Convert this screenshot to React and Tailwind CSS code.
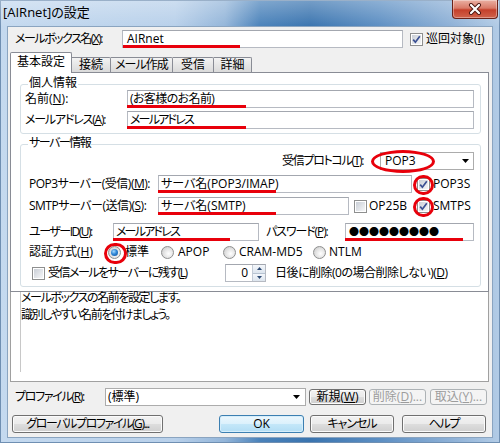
import React from "react";

const RED_BG = "bg-[#e8000b]";

function Check({ checked, className = "", children }) {
  return (
    <span className={"relative inline-flex w-[13px] h-[13px] shrink-0 border border-[#8e8f8f] bg-white " + className}>
      <span className="absolute inset-[1px] bg-[linear-gradient(135deg,#c9ced6,#f6f7f8)]" />
      {checked && (
        <svg className="absolute left-0 top-0" width="11" height="11" viewBox="0 0 11 11">
          <path d="M2.2 5.6 L4.4 8.2 L8.8 2.2" fill="none" stroke="#3a4f92" strokeWidth="1.7" />
        </svg>
      )}
      {children}
    </span>
  );
}

function Radio({ checked, children }) {
  return (
    <span className="relative inline-flex w-[13px] h-[13px] shrink-0 rounded-full border border-[#8e8f8f] bg-[radial-gradient(circle_at_60%_60%,#ffffff_0%,#e6e6e6_45%,#c4c4c4_100%)]">
      {checked && (
        <span className="absolute left-[2px] top-[2px] w-[7px] h-[7px] rounded-full bg-[radial-gradient(circle_at_40%_35%,#a6dcff_0%,#2f86d6_45%,#0c4f98_100%)]" />
      )}
      {children}
    </span>
  );
}

function Box({ className = "", children }) {
  return (
    <div className={"relative h-[18px] shrink-0 flex items-center bg-white border border-[#b6bac2] border-t-[#a3a7af] " + className}>
      {children}
    </div>
  );
}

function Arrow() {
  return (
    <svg width="7" height="4" viewBox="0 0 7 4" className="shrink-0">
      <path d="M0 0 H7 L3.5 4 Z" fill="#000" />
    </svg>
  );
}

function Combo({ className = "", children, extra }) {
  return (
    <div className={"relative h-[18px] shrink-0 flex items-center justify-between bg-white border border-[#acacac] " + className}>
      <span>{children}</span>
      <Arrow />
      {extra}
    </div>
  );
}

function Btn({ className = "", children, variant = "normal" }) {
  const v =
    variant === "default"
      ? "border-[#3c7fb1] bg-[linear-gradient(to_bottom,#ecf7fd_0%,#dcf1fc_48%,#c4e7f9_52%,#b2ddf4_100%)] shadow-[inset_0_0_0_1px_#d6eefb]"
      : variant === "disabled"
      ? "border-[#adb2b5] bg-[#f4f4f4] text-[#9c9c9c]"
      : "border-[#707070] bg-[linear-gradient(to_bottom,#f2f2f2_0%,#ebebeb_48%,#dddddd_52%,#cfcfcf_100%)] shadow-[inset_0_0_0_1px_#fbfbfb]";
  return (
    <div className={"shrink-0 flex items-center justify-center rounded-[3px] border " + v + " " + className}>
      {children}
    </div>
  );
}

function Line({ className = "" }) {
  return <span className={"absolute bottom-[-1px] h-[3px] " + RED_BG + " " + className} />;
}

const TAB_OFF =
  "h-[15px] flex items-center justify-center border border-l-0 border-b-0 border-[#898c95] rounded-tr-[2px] bg-[linear-gradient(to_bottom,#f3f3f3,#e6e6e6_50%,#dadada)]";

export default function App() {
  return (
    <div className="relative w-[500px] h-[443px] overflow-hidden flex flex-col bg-[linear-gradient(to_right,#c4d9ef_0%,#b8d0ea_35%,#93b5d9_45%,#4a82ba_52%,#3a74af_62%,#5d8fc3_76%,#8db0d6_90%,#b3cce6_100%)] shadow-[inset_0_0_0_1px_#6f8fb2] font-['Open_Sans','Noto_Sans_CJK_JP',sans-serif] [font-feature-settings:'palt'] text-[12px] leading-[14px] text-black">
      {/* title bar */}
      <div className="relative h-[27px] shrink-0 flex items-center pl-[3px] pb-[3px] bg-[linear-gradient(to_bottom,rgba(255,255,255,0.3),rgba(255,255,255,0))]">
        <span className="text-[13px] leading-[16px]">[AIRnet]の設定</span>
        <div className="absolute right-[2px] top-0 w-[46px] h-[19px] rounded-b-[4px] border border-t-0 border-[#6a2219] bg-[linear-gradient(to_bottom,#eab0a3_0%,#d97a68_45%,#c5402b_55%,#d0634c_100%)] shadow-[inset_0_0_0_1px_rgba(255,255,255,0.35)] flex items-center justify-center">
          <svg width="14" height="12" viewBox="0 0 14 12">
            <path d="M3 2 L11 10 M11 2 L3 10" stroke="#4a1510" strokeWidth="4" strokeLinecap="round" />
            <path d="M3 2 L11 10 M11 2 L3 10" stroke="#ffffff" strokeWidth="2.2" strokeLinecap="round" />
          </svg>
        </div>
      </div>

      {/* client area */}
      <div className="mx-[8px] h-[410px] shrink-0 flex flex-col bg-[#f0f0f0] shadow-[0_0_0_1px_#8aa4c0]">
        {/* mailbox name row */}
        <div className="mt-[3px] h-[18px] flex items-center">
          <span className="pl-[7px] w-[114px] shrink-0 tracking-[-1.5px]">
            メールボックス名(<u>X</u>):
          </span>
          <Box className="w-[281px] pl-[4px]">
            AIRnet
            <Line className="left-0 w-[117px]" />
          </Box>
          <Check checked className="ml-[7px]" />
          <span className="ml-[3px]">
            巡回対象(<u>I</u>)
          </span>
        </div>

        {/* tabs */}
        <div className="relative z-10 mt-[4px] h-[20px] flex items-end pl-[2px]">
          <div className="w-[62px] h-[21px] -mb-[1px] pb-[2px] flex items-center justify-center bg-white border border-b-0 border-[#898c95] rounded-t-[2px]">
            基本設定
          </div>
          <div className={"w-[39px] " + TAB_OFF}>接続</div>
          <div className={"w-[62px] tracking-[-1px] " + TAB_OFF}>メール作成</div>
          <div className={"w-[41px] " + TAB_OFF}>受信</div>
          <div className={"w-[38px] " + TAB_OFF}>詳細</div>
        </div>

        {/* tab panel */}
        <div className="ml-[2px] w-[479px] h-[220px] shrink-0 flex flex-col bg-white border border-[#898c95] pl-[9px] pt-[11px]">
          {/* personal info group */}
          <div className="relative w-[461px] h-[50px] shrink-0 flex flex-col border border-[#d5dfe5] rounded-[3px] shadow-[inset_1px_1px_0_#ffffff] pt-[5px]">
            <span className="absolute left-[7px] top-[-8px] px-[1px] bg-white leading-[12px]">個人情報</span>
            <div className="h-[18px] flex items-center">
              <span className="pl-[4px] w-[106px] shrink-0">
                名前(<u>N</u>):
              </span>
              <Box className="w-[347px] pl-[2px]">
                <span className="tracking-[-0.6px]">(お客様のお名前)</span>
                <Line className="left-[-1px] w-[119px]" />
              </Box>
            </div>
            <div className="mt-[3px] h-[18px] flex items-center">
              <span className="pl-[4px] w-[106px] shrink-0 tracking-[-1.2px]">
                メールアドレス(<u>A</u>):
              </span>
              <Box className="w-[347px] pl-[2px]">
                <span className="tracking-[-1.8px]">メールアドレス</span>
                <Line className="left-[-1px] w-[119px]" />
              </Box>
            </div>
          </div>

          {/* server info group */}
          <div className="relative mt-[10px] w-[461px] h-[143px] shrink-0 flex flex-col border border-[#d5dfe5] rounded-[3px] shadow-[inset_1px_1px_0_#ffffff] pt-[7px]">
            <span className="absolute left-[7px] top-[-8px] px-[1px] bg-white leading-[12px] tracking-[-1.5px]">サーバー情報</span>

            {/* protocol */}
            <div className="h-[18px] flex items-center">
              <span className="ml-[261px] w-[98px] shrink-0 tracking-[-1.3px]">
                受信プロトコル(<u>T</u>):
              </span>
              <Combo
                className="w-[94px] pl-[4px] pr-[4px]"
                extra={
                  <span className="absolute left-[-10px] top-[-3px] w-[64px] h-[23px] rounded-[50%] border-[3px] border-[#e8000b]" />
                }
              >
                POP3
              </Combo>
            </div>

            {/* POP3 server */}
            <div className="mt-[5px] h-[18px] flex items-center">
              <span className="pl-[8px] w-[137px] shrink-0 tracking-[-0.5px]">
                POP3サーバー(受信)(<u>M</u>):
              </span>
              <Box className="w-[254px] pl-[2px]">
                サーバ名(POP3/IMAP)
                <Line className="left-[-1px] w-[118px]" />
              </Box>
              <Check checked className="ml-[5px]">
                <span className="absolute left-[-5px] top-[-4px] w-[21px] h-[20px] rounded-full border-[3px] border-[#e8000b]" />
              </Check>
              <span className="ml-[3px]">POP3S</span>
            </div>

            {/* SMTP server */}
            <div className="mt-[4px] h-[18px] flex items-center">
              <span className="pl-[8px] w-[137px] shrink-0 tracking-[-0.5px]">
                SMTPサーバー(送信)(<u>S</u>):
              </span>
              <Box className="w-[191px] pl-[2px]">
                サーバ名(SMTP)
                <Line className="left-[-1px] w-[118px]" />
              </Box>
              <span className="ml-[5px] w-[63px] shrink-0 flex items-center">
                <Check />
                <span className="ml-[2px]">OP25B</span>
              </span>
              <Check checked>
                <span className="absolute left-[-5px] top-[-4px] w-[21px] h-[20px] rounded-full border-[3px] border-[#e8000b]" />
              </Check>
              <span className="ml-[3px]">SMTPS</span>
            </div>

            {/* user / password */}
            <div className="mt-[8px] h-[18px] flex items-center">
              <span className="pl-[8px] w-[92px] shrink-0 tracking-[-1.5px]">
                ユーザーID(<u>U</u>):
              </span>
              <Box className="w-[146px] pl-[2px]">
                <span className="tracking-[-1.8px]">メールアドレス</span>
                <Line className="left-[-1px] w-[117px]" />
              </Box>
              <span className="ml-[7px] w-[79px] shrink-0 tracking-[-1.1px]">
                パスワード(<u>P</u>):
              </span>
              <Box className="w-[129px] pl-[3px]">
                <span className="text-[10px] leading-[12px] font-['Noto_Sans_CJK_JP',sans-serif]">●●●●●●●●●</span>
                <Line className="left-[-1px] w-[118px]" />
              </Box>
            </div>

            {/* auth */}
            <div className="mt-[4px] h-[14px] flex items-center">
              <span className="pl-[8px] w-[87px] shrink-0">
                認証方式(<u>H</u>)
              </span>
              <span className="w-[53px] shrink-0 flex items-center">
                <Radio checked>
                  <span className="absolute left-[-5px] top-[-4px] w-[23px] h-[21px] rounded-full border-[3px] border-[#e8000b]" />
                </Radio>
                <span className="ml-[4px]">標準</span>
              </span>
              <span className="w-[62px] shrink-0 flex items-center">
                <Radio />
                <span className="ml-[4px]">APOP</span>
              </span>
              <span className="w-[90px] shrink-0 flex items-center">
                <Radio />
                <span className="ml-[3px]">CRAM-MD5</span>
              </span>
              <span className="flex items-center">
                <Radio />
                <span className="ml-[3px]">NTLM</span>
              </span>
            </div>

            {/* keep on server */}
            <div className="mt-[5px] h-[18px] flex items-center">
              <span className="pl-[11px] w-[204px] shrink-0 flex items-center">
                <Check />
                <span className="ml-[3px] tracking-[-1.5px]">
                  受信メールをサーバーに残す(<u>L</u>)
                </span>
              </span>
              <div className="w-[41px] h-[18px] shrink-0 flex bg-white border border-[#b6bac2] border-t-[#a3a7af]">
                <div className="flex-1 flex items-center justify-end pr-[4px]">0</div>
                <div className="w-[13px] flex flex-col border-l border-[#c3cbd6]">
                  <div className="flex-1 flex items-center justify-center border-b border-[#b7c3d1] bg-[linear-gradient(to_bottom,#f4f7fb,#dde5ee)]">
                    <svg width="5" height="3" viewBox="0 0 5 3">
                      <path d="M0 3 H5 L2.5 0 Z" fill="#2d4a73" />
                    </svg>
                  </div>
                  <div className="flex-1 flex items-center justify-center bg-[linear-gradient(to_bottom,#f4f7fb,#dde5ee)]">
                    <svg width="5" height="3" viewBox="0 0 5 3">
                      <path d="M0 0 H5 L2.5 3 Z" fill="#2d4a73" />
                    </svg>
                  </div>
                </div>
              </div>
              <span className="ml-[9px] tracking-[-0.5px]">
                日後に削除(0の場合削除しない)(<u>D</u>)
              </span>
            </div>
          </div>
        </div>

        {/* description */}
        <div className="ml-[2px] w-[479px] h-[90px] shrink-0 bg-white border border-t-0 border-[#a0a0a0]">
          <div className="ml-[9px] h-[80px] flex flex-col border-l border-[#c8c8c8]">
            <div className="-mt-[3px] flex flex-col leading-[17px] tracking-[-1.4px]">
              <span>メールボックスの名前を設定します。</span>
              <span>識別しやすい名前を付けましょう。</span>
            </div>
          </div>
        </div>

        {/* profile row */}
        <div className="mt-[6px] h-[18px] flex items-center">
          <span className="pl-[7px] w-[97px] shrink-0 tracking-[-1.3px]">
            プロファイル(<u>R</u>):
          </span>
          <Combo className="w-[201px] pl-[2px] pr-[5px]">(標準)</Combo>
          <Btn className="ml-[3px] w-[57px] h-[16px]">
            新規(<u>W</u>)
          </Btn>
          <Btn variant="disabled" className="ml-[3px] w-[57px] h-[16px]">
            削除(<u>D</u>)...
          </Btn>
          <Btn variant="disabled" className="ml-[4px] w-[57px] h-[16px]">
            取込(<u>Y</u>)...
          </Btn>
        </div>

        {/* bottom buttons */}
        <div className="mt-[9px] h-[18px] flex items-center">
          <Btn className="ml-[4px] w-[151px] h-[18px] tracking-[-1.4px]">
            グローバルプロファイル(<u>G</u>)...
          </Btn>
          <Btn variant="default" className="ml-[56px] w-[85px] h-[18px]">
            OK
          </Btn>
          <Btn className="ml-[6px] w-[84px] h-[18px] tracking-[-1px]">キャンセル</Btn>
          <Btn className="ml-[8px] w-[84px] h-[18px] tracking-[-1.3px]">ヘルプ</Btn>
        </div>
      </div>
    </div>
  );
}
